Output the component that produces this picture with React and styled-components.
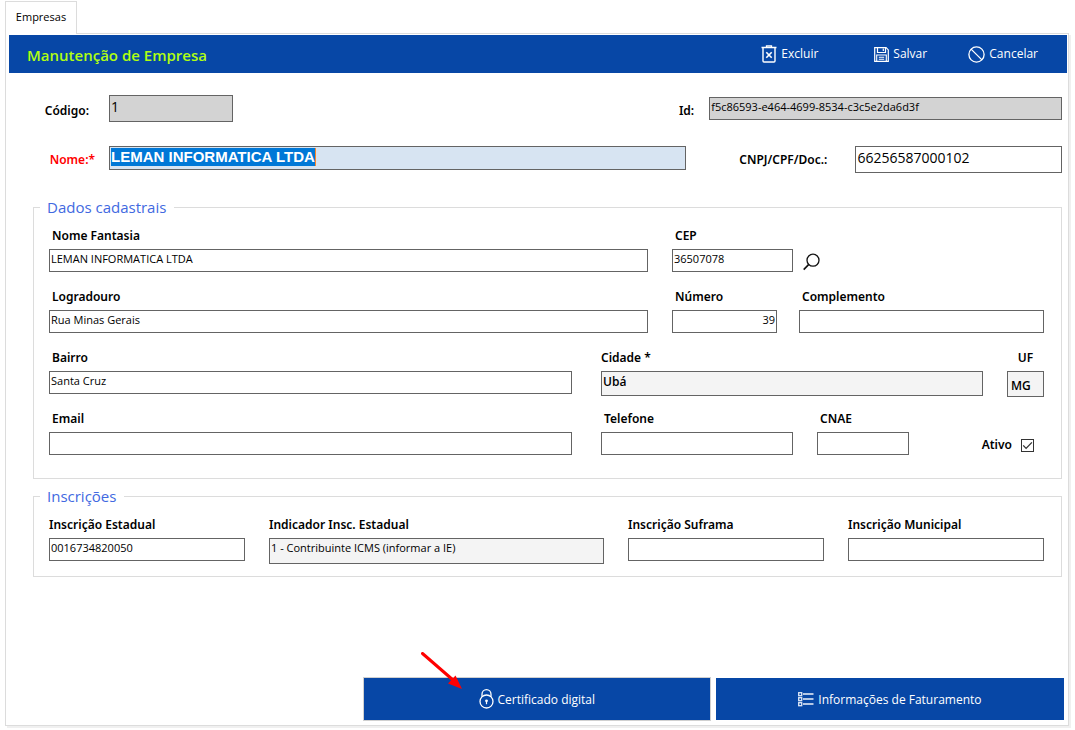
import React from "react";
import styled, { createGlobalStyle } from "styled-components";

const BLUE = "#0747a6";
const LINE = "#dcdcdc";
const FRAME = "#646464";
const LABEL_FONT = '600 12px/18px "Noto Sans", "Open Sans", sans-serif';

const GlobalStyle = createGlobalStyle`
  *, *::before, *::after { box-sizing: border-box; }
  body {
    margin: 0;
    background: #fff;
    color: #000;
    font-family: "Open Sans", "Noto Sans", sans-serif;
    font-size: 12px;
  }
  input, select, button { font-family: inherit; margin: 0; }
`;

const Page = styled.div`
  min-height: 100vh;
  display: flex;
  flex-direction: column;
  padding: 1px 4px 4px 5px;
`;

const TabBar = styled.nav`
  display: flex;
`;

const Tab = styled.button`
  height: 33px;
  width: 72px;
  padding: 0 0 3px;
  margin-bottom: -1px;
  background: #fff;
  border: 1px solid ${LINE};
  border-bottom: 0;
  color: #000;
  font-size: 11px;
  z-index: 1;
`;

const Panel = styled.main`
  flex: 1;
  display: flex;
  flex-direction: column;
  border: 1px solid ${LINE};
  box-shadow: 2px 2px 0 #f0f0f0;
  padding: 1px 1px 4px 3px;
  margin-right: 2px;
`;

const Header = styled.header`
  display: flex;
  align-items: center;
  justify-content: space-between;
  height: 38px;
  padding: 0 29px 0 18px;
  background: ${BLUE};
`;

const Title = styled.h1`
  margin: 0;
  color: #b0ff10;
  font-size: 15px;
  font-weight: 600;
  line-height: 20px;
  padding-top: 2px;
`;

const Actions = styled.div`
  display: grid;
  grid-template-columns: 113px 94px auto;
`;

const Action = styled.button`
  display: flex;
  align-items: center;
  justify-self: start;
  gap: 4px;
  padding: 0;
  border: 0;
  background: none;
  color: #fff;
  font-size: 12px;
  line-height: 18px;
`;

const Content = styled.form`
  flex: 1;
  display: flex;
  flex-direction: column;
  padding: 22px 5px 0 24px;
`;

const TopRow = styled.div`
  display: flex;
  align-items: ${(p) => p.$align};
  justify-content: space-between;
  height: 27px;
  margin-bottom: 24px;
`;

const Inline = styled.div`
  display: flex;
  align-items: inherit;
  flex: ${(p) => p.$flex || "none"};
`;

const SideLabel = styled.label`
  flex: none;
  width: ${(p) => p.$width}px;
  padding: 5px ${(p) => p.$gap}px 0 0;
  text-align: right;
  font: ${LABEL_FONT};
  white-space: nowrap;
  color: ${(p) => (p.$required ? "#ff0000" : "#000")};
`;

const Input = styled.input`
  display: block;
  width: ${(p) => p.$width || "100%"};
  height: ${(p) => p.$height || 23}px;
  min-width: 0;
  padding: 0 1px 4px;
  border: 1px solid ${FRAME};
  border-radius: 0;
  background: ${(p) => p.$fill || "#fff"};
  color: #000;
  font-size: ${(p) => p.$size || 11}px;
  font-weight: ${(p) => p.$weight || 400};
  text-align: ${(p) => p.$align || "left"};
  outline: 0;
`;

const Select = styled(Input).attrs({ as: "select" })`
  appearance: none;
  padding-bottom: 7px;
`;

const UfInput = styled(Input)`
  padding: 2px 3px 0;
`;

const ActiveBox = styled.div`
  display: flex;
  align-items: flex-start;
  flex: 1;
  height: 24px;
  padding: 1px;
  border: 1px solid ${FRAME};
  background: #d7e4f2;
`;

const ActiveInput = styled.input`
  field-sizing: content;
  max-width: 100%;
  height: 18px;
  padding: 0 0 1px;
  border: 0;
  border-right: 1px solid #ff8728;
  background: #0078d7;
  color: #fff;
  && { font-family: "Liberation Sans", Arial, sans-serif; }
  font-size: 15px;
  font-weight: 700;
  outline: 0;
`;

const Group = styled.fieldset`
  min-width: 0;
  margin: 0 0 ${(p) => p.$after || 0}px;
  padding: 10px 17px ${(p) => p.$bottom}px 15px;
  border: 1px solid ${LINE};
`;

const Legend = styled.legend`
  margin-left: -9px;
  padding: 0 8px 0 7px;
  color: #4169e1;
  font-size: 15px;
  line-height: 20px;
`;

const Row = styled.div`
  display: grid;
  grid-template-columns: ${(p) => p.$columns};
  column-gap: ${(p) => p.$gap || 24}px;
  align-items: start;
`;

const Rows = styled.div`
  display: grid;
  row-gap: 16px;
`;

const FieldBox = styled.div`
  min-width: 0;
  height: 45px;
`;

const FieldLabel = styled.label`
  display: block;
  height: 22px;
  padding-left: ${(p) => p.$inset}px;
  font: ${LABEL_FONT};
  white-space: nowrap;
  text-align: ${(p) => p.$align || "left"};
`;

const WithButton = styled.div`
  display: flex;
  gap: 10px;
`;

const SearchButton = styled.button`
  height: 23px;
  padding: 4px 0 0;
  border: 0;
  background: none;
`;

const CheckLabel = styled.label`
  display: flex;
  align-items: center;
  justify-content: flex-end;
  gap: 9px;
  height: 20px;
  margin-top: 25px;
  padding-right: 10px;
  font: ${LABEL_FONT};
`;

const CheckWrap = styled.span`
  display: grid;
  & > * { grid-area: 1 / 1; }
  svg { pointer-events: none; visibility: hidden; }
  input:checked + svg { visibility: visible; }
`;

const Check = styled.input`
  appearance: none;
  width: 13px;
  height: 13px;
  border: 1px solid #333;
  background: #fff;
`;

const Footer = styled.footer`
  display: flex;
  justify-content: flex-end;
  align-items: center;
  gap: 5px;
  margin-top: auto;
  padding: 24px 3px 0 0;
`;

const BigButton = styled.button`
  display: flex;
  align-items: center;
  justify-content: center;
  width: 33%;
  height: ${(p) => (p.$focused ? 44 : 42)}px;
  padding: 0;
  border: ${(p) => (p.$focused ? "1px solid #d0d0d0" : "0")};
  background: ${BLUE};
  color: #fff;
  font-size: 12px;
`;

const BigButtonLabel = styled.span`
  position: relative;
  display: flex;
  align-items: center;
  gap: 4px;
`;

const Arrow = styled.svg`
  position: absolute;
  right: 100%;
  bottom: 50%;
  margin: 0 16px 9px 0;
`;

function TrashIcon() {
  return (
    <svg width="16" height="18" viewBox="0 0 16 18" fill="none" stroke="#fff">
      <path d="M0.5 2.5h15M5.5 2.5v-1.7h5v1.7" strokeWidth="1.3" />
      <path d="M2 2.8v13.2q0 1 1 1h10q1 0 1-1V2.8" strokeWidth="1.4" />
      <path d="M5.3 7.2l5.4 5.6M10.7 7.2l-5.4 5.6" strokeWidth="1.6" />
    </svg>
  );
}

function SaveIcon() {
  return (
    <svg width="15" height="15" viewBox="0 0 15 15" fill="none" stroke="#fff">
      <path d="M0.7 0.7h11.4l2.2 2.2v11.4H0.7z" strokeWidth="1.2" />
      <path d="M3.5 0.8v4.7h8V0.8M9.3 1.4v2.6" strokeWidth="1.2" />
      <path d="M2.7 14.2V8h9.6v6.2M4.8 10.3h5.4M4.8 12.3h5.4" strokeWidth="1.1" />
    </svg>
  );
}

function CancelIcon() {
  return (
    <svg width="17" height="17" viewBox="0 0 17 17" fill="none" stroke="#fff" strokeWidth="1.3">
      <circle cx="8.5" cy="8.5" r="7.6" />
      <path d="M3.1 3.1l10.8 10.8" />
    </svg>
  );
}

function SearchIcon() {
  return (
    <svg width="18" height="18" viewBox="0 0 18 18" fill="none" stroke="#111" strokeWidth="1.3">
      <circle cx="10" cy="7.2" r="6" />
      <path d="M5.8 11.4L0.7 16.6" strokeWidth="1.6" />
    </svg>
  );
}

function LockIcon() {
  return (
    <svg width="15" height="20" viewBox="0 0 15 20" fill="none" stroke="#fff">
      <circle cx="7.5" cy="12.5" r="6.5" strokeWidth="1.3" />
      <path d="M3 7.8V5.2a4.5 4.5 0 0 1 9 0V7.8" strokeWidth="1.3" />
      <circle cx="7.5" cy="11.8" r="1.4" fill="#fff" stroke="none" />
      <path d="M7.5 12v3.2" strokeWidth="1.2" />
    </svg>
  );
}

function ListIcon() {
  return (
    <svg width="16" height="15" viewBox="0 0 16 15" fill="none" stroke="#dfe8f7">
      {[0, 5, 10].map((y) => (
        <g key={y}>
          <rect x="0.7" y={y + 0.7} width="3" height="3" strokeWidth="1.3" />
          <path d={`M5 ${y + 2}h10.5`} stroke="#b4c7e4" strokeWidth="2" />
        </g>
      ))}
    </svg>
  );
}

function Field({ id, label, inset = 3, labelAlign, children, ...input }) {
  return (
    <FieldBox>
      <FieldLabel htmlFor={id} $inset={inset} $align={labelAlign}>{label}</FieldLabel>
      {children || <Input id={id} {...input} />}
    </FieldBox>
  );
}

export default function App() {
  return (
    <>
      <GlobalStyle />
      <Page>
        <TabBar>
          <Tab type="button">Empresas</Tab>
        </TabBar>
        <Panel>
          <Header>
            <Title>Manutenção de Empresa</Title>
            <Actions>
              <Action type="button"><TrashIcon />Excluir</Action>
              <Action type="button"><SaveIcon />Salvar</Action>
              <Action type="button"><CancelIcon />Cancelar</Action>
            </Actions>
          </Header>
          <Content onSubmit={(e) => e.preventDefault()}>
            <TopRow $align="center">
              <Inline>
                <SideLabel htmlFor="codigo" $width={76} $gap={20}>Código:</SideLabel>
                <Input id="codigo" $width="124px" $height={27} $fill="#d3d3d3" $size={14} readOnly defaultValue="1" />
              </Inline>
              <Inline $flex="0 0 37.3%">
                <SideLabel htmlFor="guid" $width={31} $gap={15}>Id:</SideLabel>
                <Input id="guid" $fill="#d3d3d3" readOnly defaultValue="f5c86593-e464-4699-8534-c3c5e2da6d3f" />
              </Inline>
            </TopRow>
            <TopRow $align="flex-start">
              <Inline $flex="1">
                <SideLabel htmlFor="nome" $width={76} $gap={14} $required>Nome:*</SideLabel>
                <ActiveBox>
                  <ActiveInput id="nome" defaultValue="LEMAN INFORMATICA LTDA" />
                </ActiveBox>
              </Inline>
              <Inline $flex="0 0 36.5%">
                <SideLabel htmlFor="doc" $width={169} $gap={28}>CNPJ/CPF/Doc.:</SideLabel>
                <Input id="doc" $height={27} $size={14} defaultValue="66256587000102" />
              </Inline>
            </TopRow>

            <Group $bottom={23} $after={7}>
              <Legend>Dados cadastrais</Legend>
              <Rows>
                <Row $columns="599fr 372fr">
                  <Field id="fantasia" label="Nome Fantasia" defaultValue="LEMAN INFORMATICA LTDA" />
                  <Field id="cep" label="CEP">
                    <WithButton>
                      <Input id="cep" $width="121px" defaultValue="36507078" />
                      <SearchButton type="button" aria-label="Buscar CEP"><SearchIcon /></SearchButton>
                    </WithButton>
                  </Field>
                </Row>
                <Row $columns="599fr 372fr">
                  <Field id="logradouro" label="Logradouro" defaultValue="Rua Minas Gerais" />
                  <Row $columns="105fr 245fr" $gap={22}>
                    <Field id="numero" label="Número" $align="right" defaultValue="39" />
                    <Field id="complemento" label="Complemento" />
                  </Row>
                </Row>
                <Row $columns="523fr 443fr" $gap={29}>
                  <Field id="bairro" label="Bairro" defaultValue="Santa Cruz" />
                  <Row $columns="1fr 37px">
                    <Field id="cidade" label="Cidade *" inset={0} $height={25} $fill="#f4f4f4" $size={12} $weight={600} readOnly defaultValue="Ubá" />
                    <Field id="uf" label="UF" inset={0} labelAlign="center">
                      <UfInput id="uf" $height={26} $fill="#f4f4f4" $size={12} $weight={600} readOnly defaultValue="MG" />
                    </Field>
                  </Row>
                </Row>
                <Row $columns="523fr 443fr" $gap={29}>
                  <Field id="email" label="Email" type="email" />
                  <Row $columns="192fr 92fr 111fr">
                    <Field id="telefone" label="Telefone" type="tel" />
                    <Field id="cnae" label="CNAE" />
                    <CheckLabel>
                      Ativo
                      <CheckWrap>
                        <Check type="checkbox" defaultChecked />
                        <svg width="13" height="13" viewBox="0 0 13 13" fill="none" stroke="#333" strokeWidth="1.3">
                          <path d="M2.2 6.4l2.9 3L10.9 3.4" />
                        </svg>
                      </CheckWrap>
                    </CheckLabel>
                  </Row>
                </Row>
              </Rows>
            </Group>

            <Group $bottom={15}>
              <Legend>Inscrições</Legend>
              <Row $columns="196fr 335fr 196fr 196fr">
                <Field id="ie" label="Inscrição Estadual" inset={0} defaultValue="0016734820050" />
                <Field id="indicador" label="Indicador Insc. Estadual" inset={0}>
                  <Select id="indicador" $height={26} $fill="#f4f4f4">
                    <option>1 - Contribuinte ICMS (informar a IE)</option>
                  </Select>
                </Field>
                <Field id="suframa" label="Inscrição Suframa" inset={0} />
                <Field id="municipal" label="Inscrição Municipal" inset={0} />
              </Row>
            </Group>
          </Content>
          <Footer>
            <BigButton type="button" $focused>
              <BigButtonLabel>
                <Arrow width="42" height="38" viewBox="0 0 42 38" aria-hidden="true">
                  <path d="M1.5 1.5L32 28" stroke="#ff0000" strokeWidth="3" strokeLinecap="round" />
                  <path d="M41 37L27 31.5L34.5 23.5Z" fill="#ff0000" />
                </Arrow>
                <LockIcon />
                Certificado digital
              </BigButtonLabel>
            </BigButton>
            <BigButton type="button">
              <BigButtonLabel>
                <ListIcon />
                Informações de Faturamento
              </BigButtonLabel>
            </BigButton>
          </Footer>
        </Panel>
      </Page>
    </>
  );
}
